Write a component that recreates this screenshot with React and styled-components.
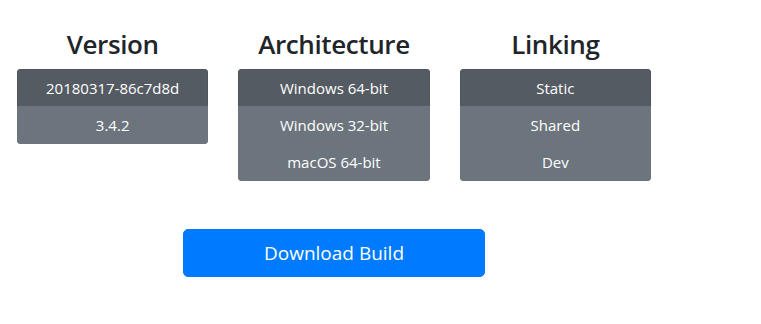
import React, { useState } from "react";
import styled, { createGlobalStyle } from "styled-components";

const GlobalStyle = createGlobalStyle`
  body {
    margin: 0;
    background: #fff;
    font-family: "Open Sans", "Noto Sans", Arial, sans-serif;
    color: #212529;
  }
`;

const options = [
  { title: "Version", items: ["20180317-86c7d8d", "3.4.2"] },
  { title: "Architecture", items: ["Windows 64-bit", "Windows 32-bit", "macOS 64-bit"] },
  { title: "Linking", items: ["Static", "Shared", "Dev"] },
];

const App = () => {
  const [picked, setPicked] = useState([0, 0, 0]);

  const pick = (col, idx) => {
    const next = [...picked];
    next[col] = idx;
    setPicked(next);
  };

  return (
    <>
      <GlobalStyle />
      <Page>
        <Columns>
          {options.map((opt, col) => (
            <Column key={opt.title}>
              <Heading>{opt.title}</Heading>
              <Group>
                {opt.items.map((item, idx) => (
                  <Choice
                    key={item}
                    $active={picked[col] === idx}
                    onClick={() => pick(col, idx)}
                  >
                    {item}
                  </Choice>
                ))}
              </Group>
            </Column>
          ))}
        </Columns>
        <DownloadButton>Download Build</DownloadButton>
      </Page>
    </>
  );
};

export default App;

const Page = styled.div`
  width: 634px;
  padding: 27px 0 0 17px;
`;

const Columns = styled.div`
  display: grid;
  grid-template-columns: repeat(3, 1fr);
  gap: 30px;
  align-items: start;
`;

const Column = styled.div`
  display: flex;
  flex-direction: column;
`;

const Heading = styled.h3`
  margin: 0 0 8px;
  font-size: 26px;
  font-weight: 600;
  line-height: 34px;
  letter-spacing: -0.4px;
  text-align: center;
  color: #212529;
`;

const Group = styled.div`
  display: flex;
  flex-direction: column;
  border-radius: 4px;
  overflow: hidden;
`;

const Choice = styled.button`
  height: 38px;
  margin-top: -1px;
  padding: 0 12px;
  border: 1px solid ${(p) => (p.$active ? "#4e555b" : "#6c757d")};
  background: ${(p) => (p.$active ? "#545b62" : "#6c757d")};
  color: #fff;
  font-family: inherit;
  font-size: 15px;
  line-height: 24px;
  cursor: pointer;
  &:first-child {
    margin-top: 0;
  }
`;

const DownloadButton = styled.button`
  display: block;
  width: 302px;
  height: 48px;
  margin: 48px auto 0;
  border: 1px solid #007bff;
  border-radius: 5px;
  background: #007bff;
  color: #fff;
  font-family: inherit;
  font-size: 19px;
  cursor: pointer;
`;
